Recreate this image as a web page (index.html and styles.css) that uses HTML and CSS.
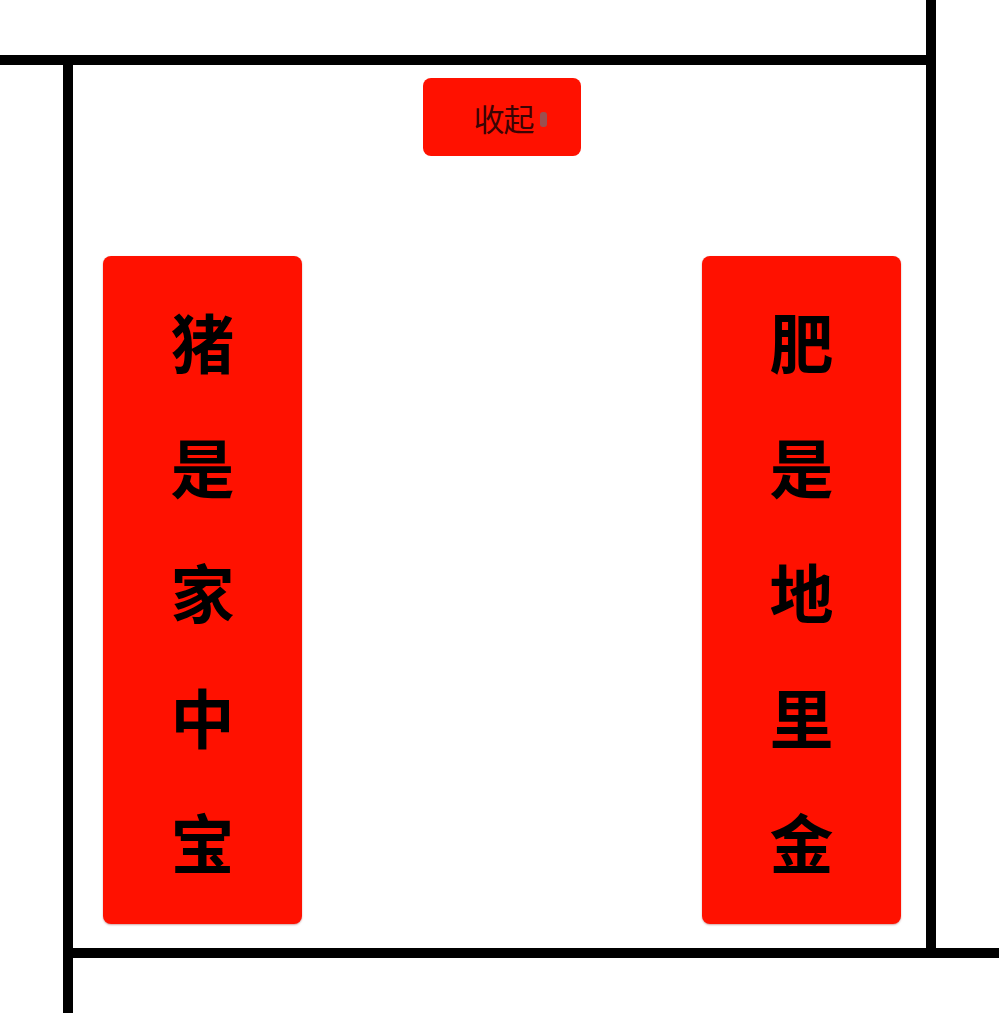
FILE: index.html
```html
<!DOCTYPE html>
<html lang="zh">
<head>
<meta charset="utf-8">
<title>对联</title>
<link rel="stylesheet" href="styles.css">
</head>
<body>
<div class="top"></div>
<div class="bar"></div>
<div class="panel">
  <div class="btn-row">
    <div class="btn">收起<span class="caret"></span></div>
  </div>
  <div class="couplets">
    <div class="couplet">
      <span>猪</span><span>是</span><span>家</span><span>中</span><span>宝</span>
    </div>
    <div class="couplet">
      <span>肥</span><span>是</span><span>地</span><span>里</span><span>金</span>
    </div>
  </div>
</div>
<div class="bottom"></div>
</body>
</html>
```

FILE: styles.css
```css
html, body {
  margin: 0;
  padding: 0;
  background: #fff;
  overflow: hidden;
}
body {
  width: 999px;
  height: 1013px;
  font-family: "Noto Sans CJK SC", "Noto Sans", sans-serif;
}
.top {
  width: 926px;
  height: 55px;
  border-right: 10px solid #000;
}
.bar {
  width: 936px;
  height: 10px;
  background: #000;
}
.panel {
  margin-left: 63px;
  width: 853px;
  height: 883px;
  border-left: 10px solid #000;
  border-right: 10px solid #000;
  display: flex;
  flex-direction: column;
}
.btn-row {
  display: flex;
  justify-content: center;
  padding-top: 13px;
  padding-left: 5px;
}
.btn {
  width: 158px;
  height: 78px;
  box-sizing: border-box;
  background: #ff1100;
  border-radius: 8px;
  display: flex;
  align-items: center;
  justify-content: center;
  gap: 6px;
  font-size: 31px;
  letter-spacing: -1px;
  color: #3a0404;
  padding-left: 16px;
}
.caret {
  display: inline-block;
  width: 7px;
  height: 15px;
  border-radius: 3px;
  background: #9a5050;
  margin-top: 4px;
}
.couplets {
  display: flex;
  justify-content: space-between;
  padding: 100px 25px 0 30px;
}
.couplet {
  width: 199px;
  height: 668px;
  background: #ff1100;
  border-radius: 8px;
  box-shadow: 0 1px 2px rgba(120, 0, 0, 0.35);
  display: flex;
  flex-direction: column;
  align-items: center;
  justify-content: center;
  padding-top: 0;
  box-sizing: border-box;
}
.couplet span {
  font-size: 64px;
  font-weight: 700;
  line-height: 125px;
  color: #000;
}
.bottom {
  margin-left: 63px;
  height: 65px;
  border-left: 10px solid #000;
  border-top: 10px solid #000;
}
```
